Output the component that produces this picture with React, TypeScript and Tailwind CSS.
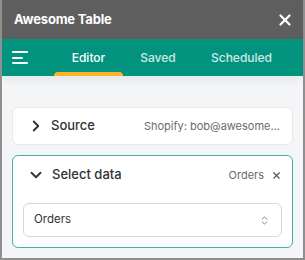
import React from 'react';
import { X, ChevronRight, ChevronDown, ChevronsUpDown } from 'lucide-react';

export default function App() {
  return (
    <div className="w-[305px] h-[260px] flex flex-col overflow-hidden border-x-2 border-b-2 border-[#8f8f8f] bg-[#f4f5f7] font-['Inter',sans-serif]">
      {/* title bar */}
      <div className="h-[39px] shrink-0 bg-[#5e5e5e] flex items-center justify-between pl-[12px] pr-[9px]">
        <span className="text-white text-[13px] font-bold tracking-[-0.2px]">Awesome Table</span>
        <X size={18} strokeWidth={3} className="text-white" />
      </div>

      {/* tabs */}
      <div className="h-[37px] shrink-0 bg-[#02937f] flex items-stretch pl-[10px] shadow-[0_4px_8px_rgba(0,0,0,0.06)] relative z-10">
        <div className="w-[42px] flex flex-col justify-center gap-[3.5px]">
          <div className="w-[16px] h-[2px] bg-white rounded-sm" />
          <div className="w-[11px] h-[2px] bg-white rounded-sm" />
          <div className="w-[16px] h-[2px] bg-white rounded-sm" />
        </div>
        <div className="relative w-[69px] flex items-center justify-center text-white text-[12px] font-medium">
          Editor
          <div className="absolute bottom-0 left-0 right-0 h-[4px] bg-[#fbb42c] rounded-t-[4px]" />
        </div>
        <div className="w-[70px] flex items-center justify-center text-white/80 text-[12px] font-medium">Saved</div>
        <div className="w-[97px] flex items-center justify-center text-white/80 text-[12px] font-medium">Scheduled</div>
      </div>

      {/* content */}
      <div className="flex-1 flex flex-col gap-[10px] px-[10px] pt-[31px]">
        <div className="h-[38px] shrink-0 bg-white border border-[#e8e9ec] rounded-[6px] flex items-center pl-[14px] pr-[12px]">
          <ChevronRight size={18} strokeWidth={2.5} className="text-[#333]" />
          <span className="ml-[6px] text-[13px] font-medium text-[#333]">Source</span>
          <span className="ml-auto text-[11px] text-[#6b6b6b]">Shopify: bob@awesome...</span>
        </div>

        <div className="h-[93px] shrink-0 bg-white border border-[#3cb3a3] rounded-[6px] flex flex-col px-[10px]">
          <div className="h-[38px] flex items-center pl-[4px] pr-0">
            <ChevronDown size={18} strokeWidth={2.5} className="text-[#333]" />
            <span className="ml-[7px] text-[13px] font-medium text-[#333]">Select data</span>
            <span className="ml-auto text-[11px] text-[#6b6b6b]">Orders</span>
            <X size={11} strokeWidth={2.5} className="ml-[7px] text-[#555]" />
          </div>
          <div className="mt-[9px] h-[34px] border border-[#d4d6da] rounded-[6px] flex items-center pl-[10px] pr-[11px]">
            <span className="text-[11.5px] text-[#333]">Orders</span>
            <ChevronsUpDown size={11} strokeWidth={2} className="ml-auto text-[#777]" />
          </div>
        </div>
      </div>
    </div>
  );
}
